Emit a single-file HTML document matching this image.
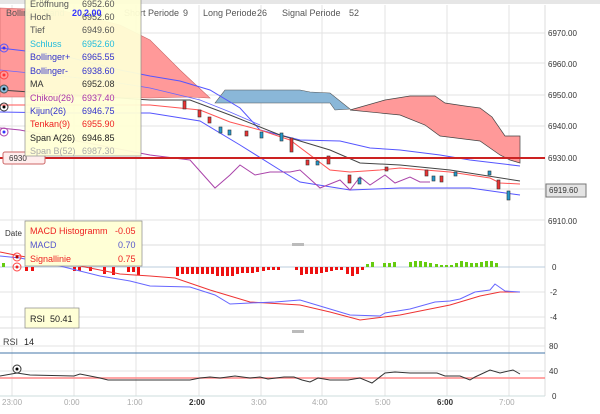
<!DOCTYPE html>
<html><head><meta charset="utf-8"><style>
body{margin:0;width:600px;height:409px;overflow:hidden;background:#fff;font-family:"Liberation Sans",sans-serif}
svg text{font-family:"Liberation Sans",sans-serif}
</style></head><body>
<svg width="600" height="409" viewBox="0 0 600 409" xmlns="http://www.w3.org/2000/svg">
<rect width="600" height="409" fill="#fff"/>
<rect x="0" y="0" width="600" height="4" fill="#e6e6e6"/>
<g stroke="#e3e3e3" stroke-width="1">
<line x1="12" y1="5" x2="12" y2="396"/><line x1="74" y1="5" x2="74" y2="396"/><line x1="136" y1="5" x2="136" y2="396"/>
<line x1="199" y1="5" x2="199" y2="396"/><line x1="261" y1="5" x2="261" y2="396"/><line x1="322" y1="5" x2="322" y2="396"/>
<line x1="385" y1="5" x2="385" y2="396"/><line x1="447" y1="5" x2="447" y2="396"/><line x1="509" y1="5" x2="509" y2="396"/>
<line x1="0" y1="33" x2="545" y2="33"/><line x1="0" y1="63" x2="545" y2="63"/><line x1="0" y1="95" x2="545" y2="95"/>
<line x1="0" y1="126" x2="545" y2="126"/><line x1="0" y1="189" x2="545" y2="189"/><line x1="0" y1="220" x2="545" y2="220"/>
<line x1="0" y1="292" x2="545" y2="292"/><line x1="0" y1="317" x2="545" y2="317"/>
<line x1="0" y1="346" x2="545" y2="346"/><line x1="0" y1="371" x2="545" y2="371"/>
</g>
<line x1="545" y1="5" x2="545" y2="396" stroke="#ddd"/>
<line x1="0" y1="245" x2="545" y2="245" stroke="#ddd"/>
<rect x="292" y="243" width="12" height="3" fill="#bbb"/>
<line x1="0" y1="328" x2="545" y2="328" stroke="#ddd"/>
<rect x="292" y="330" width="12" height="3" fill="#bbb"/>
<line x1="0" y1="396" x2="545" y2="396" stroke="#cdd"/>
<polygon points="0,8 60,10 120,25 150,40 180,70 210,98 190,97 150,98 100,97 0,97" fill="#f99" stroke="#c66" stroke-width=".6"/>
<polygon points="215,103 225,90 300,90 310,92 330,93 350,109 335,110 330,103" fill="#8ab7d8" stroke="#555" stroke-width=".6"/>
<polygon points="350,110 385,100 410,96 435,96 445,103 465,106 480,108 492,117 505,136 520,136 520,163 510,160 500,155 480,141 440,136 425,125 400,115" fill="#f99" stroke="#444" stroke-width=".7"/>
<polyline points="0,48 60,55 120,70 150,76 180,81 210,90 240,108 260,130 300,140 340,141 370,148 400,150 440,155 470,160 520,166" fill="none" stroke="#55f" stroke-width="1"/>
<polyline points="0,112 60,113 150,113 200,121 240,145 280,170 300,182 350,190 400,188 440,188 470,188 520,195" fill="none" stroke="#55f" stroke-width="1"/>
<polyline points="0,70 100,80 150,88 200,100 230,112 260,125" fill="none" stroke="#66f" stroke-width=".8"/>
<polyline points="0,90 150,100 190,100 230,115 280,135 330,150 360,163 400,165 450,170 520,181" fill="none" stroke="#444" stroke-width="1"/>
<polyline points="0,105 150,105 200,110 230,122 260,130 290,140 330,170 350,172 380,170 400,168 450,172 490,178 500,183 520,184" fill="none" stroke="#f55" stroke-width="1"/>
<polyline points="0,128 20,130 150,155 190,160 215,188 230,175 240,165 255,175 270,172 290,172 300,170 320,188 340,180 350,190 360,177 370,185 385,175 395,183 410,177 420,182 430,182" fill="none" stroke="#a4a" stroke-width="1"/>
<g stroke="#333" stroke-width=".6">
<rect x="183" y="101" width="3" height="8" fill="#e33"/><rect x="198" y="110" width="3" height="7" fill="#e33"/><rect x="208" y="117" width="3" height="6" fill="#e33"/>
<rect x="219" y="127" width="3" height="6" fill="#29c"/><rect x="228" y="130" width="3" height="5" fill="#29c"/><rect x="245" y="131" width="3" height="5" fill="#e33"/>
<rect x="260" y="132" width="3" height="6" fill="#29c"/><rect x="280" y="133" width="3" height="8" fill="#29c"/><rect x="290" y="138" width="3" height="14" fill="#e33"/>
<rect x="306" y="160" width="3" height="5" fill="#e33"/><rect x="316" y="161" width="3" height="4" fill="#29c"/><rect x="327" y="156" width="3" height="8" fill="#e33"/>
<rect x="348" y="175" width="3" height="8" fill="#e33"/><rect x="358" y="178" width="3" height="6" fill="#29c"/><rect x="385" y="167" width="3" height="4" fill="#e33"/>
<rect x="425" y="170" width="3" height="6" fill="#e33"/><rect x="432" y="176" width="3" height="5" fill="#29c"/><rect x="440" y="176" width="3" height="6" fill="#e33"/>
<rect x="454" y="172" width="3" height="4" fill="#29c"/><rect x="488" y="171" width="3" height="4" fill="#29c"/><rect x="497" y="180" width="3" height="9" fill="#e33"/>
<rect x="507" y="191" width="3" height="9" fill="#29c"/>
</g>
<line x1="0" y1="158" x2="545" y2="158" stroke="#c22" stroke-width="2"/>
<rect x="3" y="152" width="42" height="12" rx="2" fill="#fee" stroke="#c66"/>
<text x="9" y="161" font-size="8" fill="#333">6930</text>
<g font-size="8" fill="#333">
<text x="548" y="36">6970.00</text><text x="548" y="67">6960.00</text><text x="548" y="98">6950.00</text>
<text x="548" y="129">6940.00</text><text x="548" y="161">6930.00</text><text x="548" y="224">6910.00</text>
</g>
<rect x="546" y="184" width="40" height="13" fill="#e4e4e4" stroke="#777"/>
<text x="549" y="193" font-size="8" fill="#333">6919.60</text>
<g font-size="9" fill="#555">
<text x="124" y="16">Short Periode</text><text x="183" y="16">9</text>
<text x="203" y="16">Long Periode</text><text x="257" y="16">26</text>
<text x="282" y="16">Signal Periode</text><text x="349" y="16">52</text>
<text x="6" y="16">Bollinger Band</text>
</g>
<text x="5" y="236" font-size="8" fill="#333">Date</text>
<circle cx="4" cy="48" r="4" fill="none" stroke="#55f"/><circle cx="4" cy="48" r="1.5" fill="#33f"/>
<circle cx="4" cy="75" r="4" fill="none" stroke="#f44"/><circle cx="4" cy="75" r="1.5" fill="#f33"/>
<circle cx="4" cy="89" r="4" fill="#8bd" stroke="#555"/><circle cx="4" cy="89" r="1.5" fill="#000"/>
<circle cx="4" cy="107" r="4" fill="none" stroke="#333"/><circle cx="4" cy="107" r="1.5" fill="#000"/>
<circle cx="4" cy="132" r="4" fill="none" stroke="#a4a"/><circle cx="4" cy="132" r="1.5" fill="#33f"/>
<line x1="0" y1="267" x2="545" y2="267" stroke="#bcd"/>
<g fill="#e11">
<rect x="176" y="267" width="3" height="9"/><rect x="181" y="267" width="3" height="7"/><rect x="186" y="267" width="3" height="7"/><rect x="191" y="267" width="3" height="7"/><rect x="196" y="267" width="3" height="7"/><rect x="201" y="267" width="3" height="7"/><rect x="206" y="267" width="3" height="7"/><rect x="211" y="267" width="3" height="7"/><rect x="216" y="267" width="3" height="9"/><rect x="221" y="267" width="3" height="9"/><rect x="226" y="267" width="3" height="9"/><rect x="231" y="267" width="3" height="9"/><rect x="236" y="267" width="3" height="7"/><rect x="241" y="267" width="3" height="6"/><rect x="246" y="267" width="3" height="6"/><rect x="251" y="267" width="3" height="6"/><rect x="256" y="267" width="3" height="5"/><rect x="262" y="267" width="3" height="4"/><rect x="267" y="267" width="3" height="3"/><rect x="272" y="267" width="3" height="3"/><rect x="277" y="267" width="3" height="3"/>
<rect x="295" y="267" width="3" height="3"/><rect x="300" y="267" width="3" height="8"/><rect x="305" y="267" width="3" height="7"/><rect x="310" y="267" width="3" height="7"/><rect x="315" y="267" width="3" height="7"/><rect x="320" y="267" width="3" height="6"/><rect x="325" y="267" width="3" height="5"/><rect x="330" y="267" width="3" height="4"/><rect x="335" y="267" width="3" height="3"/><rect x="340" y="267" width="3" height="3"/><rect x="346" y="267" width="3" height="7"/><rect x="351" y="267" width="3" height="9"/><rect x="356" y="267" width="3" height="7"/><rect x="361" y="267" width="3" height="3"/>
<rect x="25" y="267" width="3" height="4"/><rect x="31" y="267" width="3" height="4"/><rect x="73" y="267" width="3" height="4"/><rect x="78" y="267" width="3" height="4"/><rect x="89" y="267" width="3" height="4"/><rect x="103" y="267" width="3" height="7"/><rect x="112" y="267" width="3" height="8"/><rect x="127" y="267" width="3" height="5"/><rect x="132" y="267" width="3" height="5"/><rect x="137" y="267" width="3" height="8"/>
</g>
<g fill="#6c1">
<rect x="366" y="264" width="3" height="3"/><rect x="371" y="262" width="3" height="5"/><rect x="383" y="263" width="3" height="4"/><rect x="388" y="263" width="3" height="4"/><rect x="393" y="262" width="3" height="5"/>
<rect x="409" y="262" width="3" height="5"/><rect x="414" y="261" width="3" height="6"/><rect x="419" y="261" width="3" height="6"/><rect x="424" y="262" width="3" height="5"/><rect x="429" y="263" width="3" height="4"/><rect x="435" y="264" width="3" height="3"/><rect x="440" y="265" width="3" height="2"/><rect x="445" y="265" width="3" height="2"/><rect x="450" y="265" width="3" height="2"/><rect x="455" y="263" width="3" height="4"/><rect x="460" y="261" width="3" height="6"/><rect x="465" y="262" width="3" height="5"/><rect x="470" y="263" width="3" height="4"/><rect x="475" y="263" width="3" height="4"/><rect x="480" y="262" width="3" height="5"/><rect x="485" y="261" width="3" height="6"/><rect x="490" y="261" width="3" height="6"/><rect x="495" y="263" width="3" height="4"/>
<rect x="2" y="263" width="3" height="4"/>
</g>
<polyline points="0,252 20,256 60,262 100,270 120,274 150,276 175,278 210,290 250,302 300,305 330,312 360,320 400,315 450,305 480,296 500,292 520,292" fill="none" stroke="#e33" stroke-width="1"/>
<polyline points="0,256 20,258 60,266 100,276 130,281 150,286 190,287 215,295 230,304 250,303 275,302 300,300 320,306 350,315 380,316 385,313 410,309 435,302 450,301 460,299 475,292 490,290 495,284 505,291 520,292" fill="none" stroke="#66f" stroke-width="1"/>
<circle cx="17" cy="257" r="4" fill="none" stroke="#f44"/><circle cx="17" cy="257" r="1.5" fill="#a00"/>
<circle cx="17" cy="267" r="4" fill="none" stroke="#f44"/><circle cx="17" cy="267" r="1.5" fill="#e22"/>
<g font-size="8" fill="#333"><text x="552" y="270">0</text><text x="550" y="295">-2</text><text x="550" y="320">-4</text></g>
<line x1="0" y1="353" x2="545" y2="353" stroke="#47a" stroke-width="1"/>
<line x1="0" y1="378" x2="545" y2="378" stroke="#f88" stroke-width="1.5"/>
<polyline points="0,376 17,373 30,375 74,376 80,374 100,378 108,380 150,380 190,380 200,378 210,377 220,378 235,376 250,378 260,377 268,379 284,377 294,377 302,380 310,382 318,378 330,380 348,380 360,378 372,383 385,373 395,372 410,373 420,373 437,373 445,376 460,376 470,380 475,377 490,370 500,373 513,370 520,374" fill="none" stroke="#333" stroke-width="1"/>
<circle cx="17" cy="369" r="4" fill="none" stroke="#333"/><circle cx="17" cy="369" r="1.5" fill="#000"/>
<text x="3" y="345" font-size="9" fill="#444">RSI</text><text x="24" y="345" font-size="9" fill="#222">14</text>
<g font-size="8" fill="#333"><text x="549" y="349">80</text><text x="549" y="374">40</text><text x="552" y="399">0</text></g>
<g font-size="8" fill="#aaa"><text x="2" y="405">23:00</text><text x="64" y="405">0:00</text><text x="127" y="405">1:00</text><text x="251" y="405">3:00</text><text x="312" y="405">4:00</text><text x="375" y="405">5:00</text><text x="499" y="405">7:00</text></g>
<g font-size="8" fill="#333" font-weight="bold"><text x="189" y="405">2:00</text><text x="437" y="405">6:00</text></g>
<rect x="25" y="-2" width="116" height="158" fill="#ffffd6" stroke="#888" stroke-width=".7" opacity=".95"/>
<g font-size="9">
<text x="30" y="7" fill="#555">Eröffnung</text><text x="82" y="7" fill="#555">6952.60</text>
<text x="30" y="20" fill="#555">Hoch</text><text x="82" y="20" fill="#555">6952.60</text>
<text x="72" y="16" fill="#33f" font-weight="bold">20</text><text x="84" y="16" fill="#33f" font-weight="bold">2.00</text>
<text x="30" y="33" fill="#555">Tief</text><text x="82" y="33" fill="#555">6949.60</text>
<text x="30" y="47" fill="#2bd">Schluss</text><text x="82" y="47" fill="#2bd">6952.60</text>
<text x="30" y="60" fill="#33c">Bollinger+</text><text x="82" y="60" fill="#33c">6965.55</text>
<text x="30" y="74" fill="#33c">Bollinger-</text><text x="82" y="74" fill="#33c">6938.60</text>
<text x="30" y="87" fill="#333">MA</text><text x="82" y="87" fill="#333">6952.08</text>
<text x="30" y="101" fill="#a3a">Chikou(26)</text><text x="82" y="101" fill="#a3a">6937.40</text>
<text x="30" y="114" fill="#33c">Kijun(26)</text><text x="82" y="114" fill="#33c">6946.75</text>
<text x="30" y="127" fill="#e22">Tenkan(9)</text><text x="82" y="127" fill="#e22">6955.90</text>
<text x="30" y="141" fill="#222">Span A(26)</text><text x="82" y="141" fill="#222">6946.85</text>
<text x="30" y="154" fill="#aaa">Span B(52)</text><text x="82" y="154" fill="#aaa">6987.30</text>
</g>
<rect x="25" y="221" width="117" height="45" fill="#ffffd6" stroke="#888" stroke-width=".7"/>
<g font-size="9">
<text x="30" y="234" fill="#e22">MACD Histogramm</text><text x="115" y="234" fill="#e22">-0.05</text>
<text x="30" y="248" fill="#55c">MACD</text><text x="118" y="248" fill="#55c">0.70</text>
<text x="30" y="262" fill="#e22">Signallinie</text><text x="118" y="262" fill="#e22">0.75</text>
</g>
<rect x="25" y="308" width="54" height="20" fill="#ffffd6" stroke="#888" stroke-width=".7"/>
<text x="30" y="322" font-size="9" fill="#222">RSI</text><text x="50" y="322" font-size="9" fill="#222">50.41</text>
</svg>
</body></html>
